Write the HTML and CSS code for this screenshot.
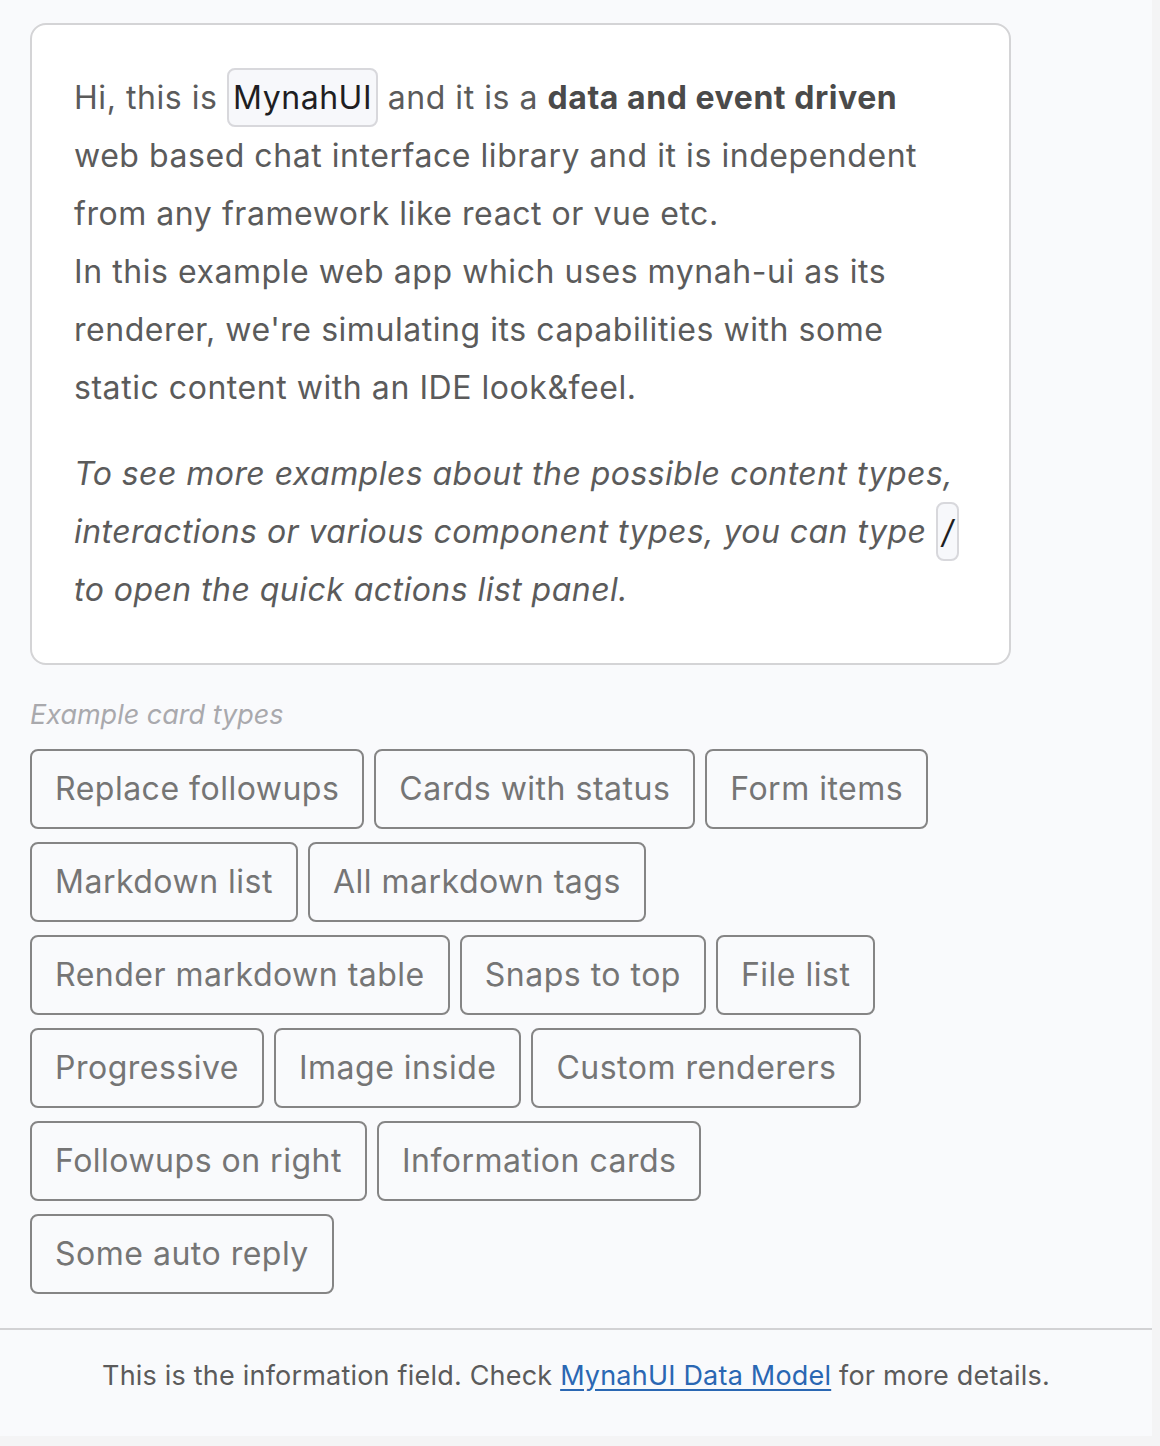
FILE: index.html
```html
<!DOCTYPE html>
<html>
<head>
<meta charset="utf-8">
<link rel="stylesheet" href="styles.css">
</head>
<body>
<div class="app">
  <div class="chat">
    <div class="card">
      <p class="para">Hi, this is <code class="chip">MynahUI</code> and it is a <strong>data and event driven</strong> web based chat interface library and it is independent from any framework like react or vue etc.<br>In this example web app which uses mynah-ui as its renderer, we're simulating its capabilities with some static content with an IDE look&amp;feel.</p>
      <p class="para italic">To see more examples about the possible content types, interactions or various component types, you can type <code class="chip slash">/</code> to open the quick actions list panel.</p>
    </div>
    <div class="followups">
      <div class="label">Example card types</div>
      <div class="buttons">
        <button class="btn">Replace followups</button>
        <button class="btn">Cards with status</button>
        <button class="btn">Form items</button>
        <button class="btn">Markdown list</button>
        <button class="btn">All markdown tags</button>
        <button class="btn">Render markdown table</button>
        <button class="btn">Snaps to top</button>
        <button class="btn">File list</button>
        <button class="btn">Progressive</button>
        <button class="btn">Image inside</button>
        <button class="btn">Custom renderers</button>
        <button class="btn">Followups on right</button>
        <button class="btn">Information cards</button>
        <button class="btn">Some auto reply</button>
      </div>
    </div>
  </div>
  <div class="footer">
    <span>This is the information field. Check <a href="#">MynahUI Data Model</a> for more details.</span>
  </div>
</div>
</body>
</html>
```
FILE: styles.css
```css
html, body {
  margin: 0;
  padding: 0;
  background: #f4f4f5;
}
body {
  font-family: Inter, "Noto Sans", "Liberation Sans", sans-serif;
}
.app {
  width: 1152px;
  height: 1436px;
  background: #f9fafc;
  display: flex;
  flex-direction: column;
  box-sizing: border-box;
}
.chat {
  flex: 1;
  padding: 23px 30px 0 30px;
}
.card {
  width: 981px;
  box-sizing: border-box;
  background: #ffffff;
  border: 2px solid #d4d4d6;
  border-radius: 16px;
  padding: 44px 44px 44px 42px;
}
.para {
  margin: 0;
  font-size: 32px;
  line-height: 58px;
  letter-spacing: 0.55px;
  color: #5b5b5b;
}
.para + .para {
  margin-top: 28px;
}
.para strong {
  font-weight: 700;
  color: #4a4a4a;
}
.italic {
  font-style: italic;
  letter-spacing: 0.45px;
}
.chip {
  font-family: Inter, "Noto Sans", "Liberation Sans", sans-serif;
  font-style: normal;
  font-size: 32px;
  letter-spacing: 0.55px;
  color: #1e1e22;
  background: #f7f8fb;
  border: 2px solid #d8d8dc;
  border-radius: 8px;
  padding: 8px 4px;
}
.slash {
  font-style: italic;
  letter-spacing: 0;
  padding: 8px 4px;
}
.followups {
  margin-top: 30px;
}
.label {
  font-size: 27px;
  font-style: italic;
  color: #a9a9ad;
  line-height: 40px;
  margin-bottom: 14px;
}
.buttons {
  display: flex;
  flex-wrap: wrap;
  gap: 13px 10px;
  width: 981px;
}
.btn {
  font-family: Inter, "Noto Sans", "Liberation Sans", sans-serif;
  font-size: 32px;
  letter-spacing: 0.5px;
  color: #757575;
  background: transparent;
  border: 2px solid #858585;
  border-radius: 8px;
  height: 80px;
  padding: 0 23px;
  line-height: 76px;
  cursor: pointer;
}
.footer {
  border-top: 2px solid #d2d2d4;
  height: 108px;
  box-sizing: border-box;
  display: flex;
  align-items: center;
  justify-content: center;
  font-size: 27px;
  letter-spacing: 0.2px;
  color: #5b5b5b;
  padding-bottom: 16px;
}
.footer a {
  color: #2a67b3;
  text-decoration: underline;
  text-underline-offset: 4px;
}
```
